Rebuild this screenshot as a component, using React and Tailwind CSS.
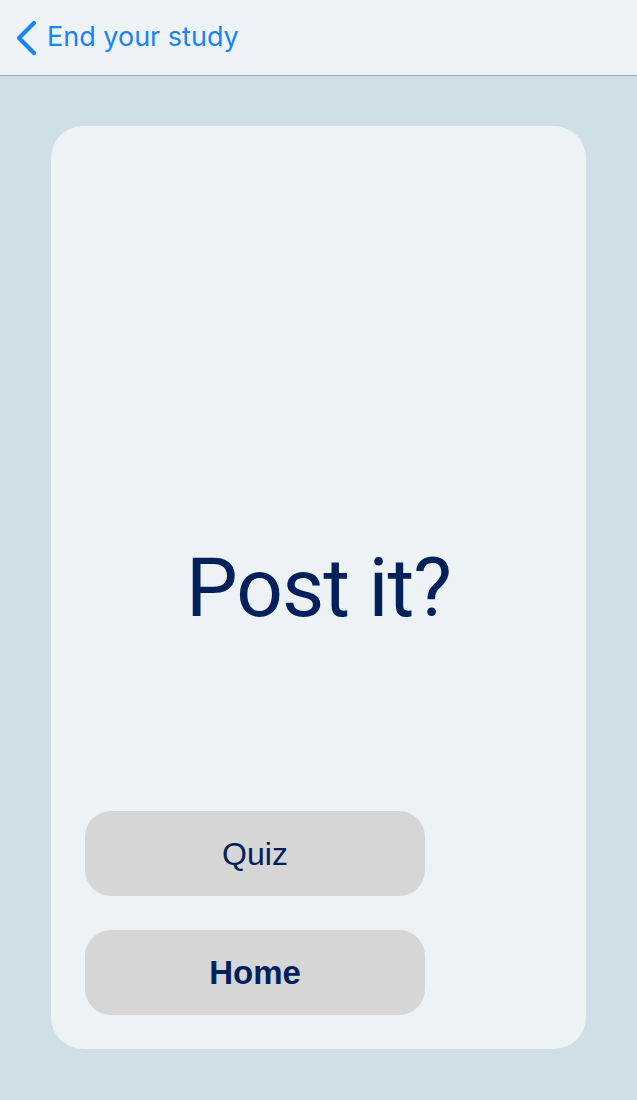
import React from "react";

const App = () => {
  return (
    <div className="min-h-[1100px] bg-[#cfdfe6]" style={{ fontFamily: "Inter, 'Noto Sans', sans-serif" }}>
      {/* HEADER */}
      <div className="h-[76px] bg-[#eef3f7] border-b border-[#9aa0a4] flex items-center pl-[14px]">
        <button className="flex items-center gap-[9px] text-[#1a82fb]">
          <svg width="24" height="36" viewBox="0 0 24 36" fill="none">
            <path d="M20 3 L5 18 L20 33" stroke="#1a82fb" strokeWidth="4.2" strokeLinecap="round" strokeLinejoin="round" />
          </svg>
          <span className="text-[27px] leading-none -mt-[2px]">End your study</span>
        </button>
      </div>

      {/* CARD */}
      <div className="px-[51px] pt-[50px] pb-[51px]">
        <div className="h-[923px] bg-[#edf2f5] rounded-[32px] flex flex-col">
          <div
            className="mt-[421px] text-center text-[#00205b] text-[82px] leading-none tracking-[-1px]"
            style={{ fontFamily: "Roboto, 'Noto Sans', sans-serif" }}
          >
            Post it?
          </div>

          <div className="mt-auto flex flex-col gap-[34px] pl-[34px] pb-[34px]" style={{ fontFamily: "'Liberation Sans', Arial, sans-serif" }}>
            <button className="w-[340px] h-[85px] rounded-[26px] bg-[#d6d6d6] text-[#00205b] text-[32px]">
              Quiz
            </button>
            <button className="w-[340px] h-[85px] rounded-[26px] bg-[#d6d6d6] text-[#00205b] text-[33px] font-bold">
              Home
            </button>
          </div>
        </div>
      </div>
    </div>
  );
};

export default App;
